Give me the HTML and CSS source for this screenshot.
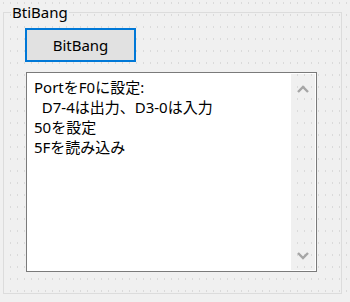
FILE: index.html
```html
<!DOCTYPE html>
<html lang="ja">
<head>
    <meta charset="UTF-8">
    <meta name="viewport" content="width=device-width, initial-scale=1.0">
    <title>BtiBang</title>
    <link rel="stylesheet" href="styles.css">
</head>
<body>
<fieldset class="group">
    <legend class="group-title">BtiBang</legend>
    <div class="group-body">
        <button type="button" class="bitbang-btn">BitBang</button>
        <div class="log">
            <div class="log-text">PortをF0に設定:
  D7-4は出力、D3-0は入力
50を設定
5Fを読み込み</div>
            <div class="scrollbar">
                <span class="arrow">
                    <svg width="12" height="8" viewBox="0 0 12 8"><polyline points="1,7 6,2 11,7" fill="none" stroke="#a6a6a6" stroke-width="2.4"/></svg>
                </span>
                <span class="arrow">
                    <svg width="12" height="8" viewBox="0 0 12 8"><polyline points="1,1 6,6 11,1" fill="none" stroke="#a6a6a6" stroke-width="2.4"/></svg>
                </span>
            </div>
        </div>
    </div>
</fieldset>
</body>
</html>
```

FILE: styles.css
```css
html, body {
    height: 100%;
}
body {
    margin: 0;
    display: flex;
    flex-direction: column;
    background-color: #f0f0f0;
    background-image: radial-gradient(circle, #dadada 0.5px, transparent 0.8px);
    background-size: 7px 12px;
    background-position: 0 -3px;
    background-attachment: fixed;
    font-family: "Noto Sans", "Noto Sans CJK JP", sans-serif;
    font-size: 15px;
    color: #000;
}
.group {
    flex: 1;
    min-width: 0;
    margin: 2px 8px 8px 3px;
    padding: 0;
    border: 1px solid #dcdcdc;
}
.group-title {
    margin-left: 7px;
    padding: 0 1px;
    line-height: 20px;
}
.group-body {
    display: flex;
    flex-direction: column;
    align-items: flex-start;
    padding: 6px 0 0 21px;
}
.bitbang-btn {
    width: 111px;
    height: 34px;
    padding: 0;
    border: 2px solid #0078d7;
    background: #e1e1e1;
    font-family: "Noto Sans", sans-serif;
    font-size: 15px;
    color: #000;
}
.log {
    display: flex;
    width: 291px;
    height: 200px;
    margin: 10px 0 0 1px;
    padding: 1px;
    box-sizing: border-box;
    border: 1px solid #7a7a7a;
    background: #fff;
}
.log-text {
    flex: 1;
    padding: 3px 0 0 6px;
    white-space: pre;
    line-height: 20px;
}
.scrollbar {
    width: 24px;
    display: flex;
    flex-direction: column;
    justify-content: space-between;
    background-color: #f0f0f0;
    background-image: radial-gradient(circle, #dadada 0.5px, transparent 0.8px);
    background-size: 7px 12px;
    background-position: 0 -3px;
    background-attachment: fixed;
}
.arrow {
    height: 29px;
    display: flex;
    align-items: center;
    justify-content: center;
}
```
